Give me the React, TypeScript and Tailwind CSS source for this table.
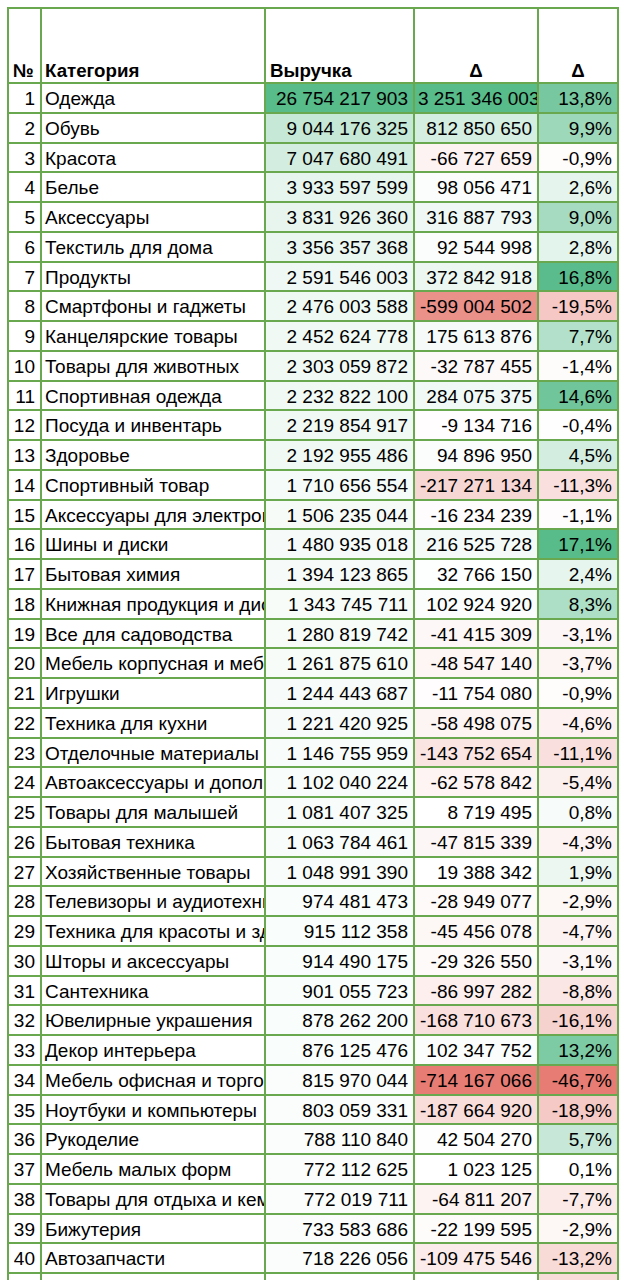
import React from "react";

type Row = [number, string, number, number, number];

const rows: Row[] = [
  [1, "Одежда", 26754217903, 3251346003, 13.8],
  [2, "Обувь", 9044176325, 812850650, 9.9],
  [3, "Красота", 7047680491, -66727659, -0.9],
  [4, "Белье", 3933597599, 98056471, 2.6],
  [5, "Аксессуары", 3831926360, 316887793, 9.0],
  [6, "Текстиль для дома", 3356357368, 92544998, 2.8],
  [7, "Продукты", 2591546003, 372842918, 16.8],
  [8, "Смартфоны и гаджеты", 2476003588, -599004502, -19.5],
  [9, "Канцелярские товары", 2452624778, 175613876, 7.7],
  [10, "Товары для животных", 2303059872, -32787455, -1.4],
  [11, "Спортивная одежда", 2232822100, 284075375, 14.6],
  [12, "Посуда и инвентарь", 2219854917, -9134716, -0.4],
  [13, "Здоровье", 2192955486, 94896950, 4.5],
  [14, "Спортивный товар", 1710656554, -217271134, -11.3],
  [15, "Аксессуары для электроники", 1506235044, -16234239, -1.1],
  [16, "Шины и диски", 1480935018, 216525728, 17.1],
  [17, "Бытовая химия", 1394123865, 32766150, 2.4],
  [18, "Книжная продукция и диски", 1343745711, 102924920, 8.3],
  [19, "Все для садоводства", 1280819742, -41415309, -3.1],
  [20, "Мебель корпусная и мебельные", 1261875610, -48547140, -3.7],
  [21, "Игрушки", 1244443687, -11754080, -0.9],
  [22, "Техника для кухни", 1221420925, -58498075, -4.6],
  [23, "Отделочные материалы", 1146755959, -143752654, -11.1],
  [24, "Автоаксессуары и дополнительное", 1102040224, -62578842, -5.4],
  [25, "Товары для малышей", 1081407325, 8719495, 0.8],
  [26, "Бытовая техника", 1063784461, -47815339, -4.3],
  [27, "Хозяйственные товары", 1048991390, 19388342, 1.9],
  [28, "Телевизоры и аудиотехника", 974481473, -28949077, -2.9],
  [29, "Техника для красоты и здоровья", 915112358, -45456078, -4.7],
  [30, "Шторы и аксессуары", 914490175, -29326550, -3.1],
  [31, "Сантехника", 901055723, -86997282, -8.8],
  [32, "Ювелирные украшения", 878262200, -168710673, -16.1],
  [33, "Декор интерьера", 876125476, 102347752, 13.2],
  [34, "Мебель офисная и торговая", 815970044, -714167066, -46.7],
  [35, "Ноутбуки и компьютеры", 803059331, -187664920, -18.9],
  [36, "Рукоделие", 788110840, 42504270, 5.7],
  [37, "Мебель малых форм", 772112625, 1023125, 0.1],
  [38, "Товары для отдыха и кемпинга", 772019711, -64811207, -7.7],
  [39, "Бижутерия", 733583686, -22199595, -2.9],
  [40, "Автозапчасти", 718226056, -109475546, -13.2],
];

const GREEN: [number, number, number] = [87, 187, 138];
const RED: [number, number, number] = [230, 124, 115];

function mix(c: [number, number, number], t: number): string {
  const k = Math.max(0, Math.min(1, t));
  const r = Math.round(255 + (c[0] - 255) * k);
  const g = Math.round(255 + (c[1] - 255) * k);
  const b = Math.round(255 + (c[2] - 255) * k);
  return `rgb(${r}, ${g}, ${b})`;
}

function diverge(v: number, max: number, min: number): string {
  if (v >= 0) return mix(GREEN, v / max);
  return mix(RED, v / min);
}

function fmt(n: number): string {
  const neg = n < 0;
  const s = Math.abs(n)
    .toString()
    .replace(/\B(?=(\d{3})+(?!\d))/g, " ");
  return (neg ? "-" : "") + s;
}

function pct(n: number): string {
  return n.toFixed(1).replace(".", ",") + "%";
}

const REV_MAX = 26754217903;
const D_MAX = 3251346003;
const D_MIN = -714167066;
const P_MAX = 17.1;
const P_MIN = -46.7;

const cellBase =
  "flex items-center pt-[1.5px] overflow-hidden whitespace-nowrap leading-none";

export default function App() {
  return (
    <div className="min-h-screen bg-white font-['Liberation_Sans',Arial,sans-serif] text-[19px] text-black">
      <div className="pt-[7px] pl-[7px]">
        <div className="grid w-[612px] grid-cols-[31px_222px_147px_122px_78px] grid-rows-[73px] auto-rows-[27.75px] gap-[2px] bg-[#6aa84f] p-[2px]">
          {/* header */}
          <div className="flex items-end bg-white pl-[4px] pb-[1.5px] text-[18.7px] font-bold leading-none">
            №
          </div>
          <div className="flex items-end bg-white pl-[3px] pb-[1.5px] text-[18.7px] font-bold leading-none">
            Категория
          </div>
          <div className="flex items-end bg-white pl-[4px] pb-[1.5px] text-[18.7px] font-bold leading-none">
            Выручка
          </div>
          <div className="flex items-end justify-center bg-white pb-[1.5px] text-[18.7px] font-bold leading-none">
            Δ
          </div>
          <div className="flex items-end justify-center bg-white pb-[1.5px] text-[18.7px] font-bold leading-none">
            Δ
          </div>

          {rows.map(([n, name, rev, d, p]) => {
            const dOverflow = Math.abs(d) >= 1000000000;
            return (
              <React.Fragment key={n}>
                <div className={`${cellBase} justify-end bg-white pr-[5px]`}>
                  {n}
                </div>
                <div className={`${cellBase} justify-start bg-white pl-[3px]`}>
                  {name}
                </div>
                <div
                  className={`${cellBase} justify-end pr-[5px]`}
                  style={{ backgroundColor: mix(GREEN, rev / REV_MAX) }}
                >
                  {fmt(rev)}
                </div>
                <div
                  className={`${cellBase} ${
                    dOverflow ? "justify-start pl-[3px]" : "justify-end pr-[5px]"
                  }`}
                  style={{ backgroundColor: diverge(d, D_MAX, D_MIN) }}
                >
                  {fmt(d)}
                </div>
                <div
                  className={`${cellBase} justify-end pr-[5px]`}
                  style={{ backgroundColor: diverge(p, P_MAX, P_MIN) }}
                >
                  {pct(p)}
                </div>
              </React.Fragment>
            );
          })}

          {/* partially visible next row */}
          <div className="bg-white" />
          <div className="bg-white" />
          <div className="bg-white" />
          <div className="bg-white" />
          <div style={{ backgroundColor: diverge(-12.5, P_MAX, P_MIN) }} />
        </div>
      </div>
    </div>
  );
}
